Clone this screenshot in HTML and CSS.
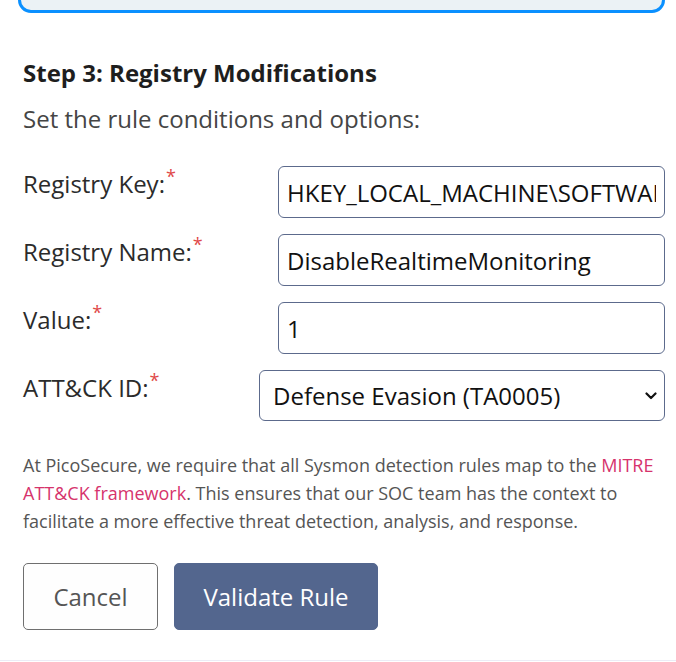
FILE: index.html
```html
<!DOCTYPE html>
<html lang="en">
<head>
<meta charset="utf-8">
<title>Step 3: Registry Modifications</title>
<link rel="stylesheet" href="styles.css">
</head>
<body>
<div class="page">
  <div class="prev-card"></div>
  <form class="step">
    <h2 class="step-title">Step 3: Registry Modifications</h2>
    <p class="step-sub">Set the rule conditions and options:</p>

    <div class="row">
      <label class="lbl" for="rk">Registry Key:<span class="req">*</span></label>
      <input class="ctl ctl-input" id="rk" type="text" value="HKEY_LOCAL_MACHINE\SOFTWARE\Policies\Microsoft\Windows Defender\Real-Time Protection">
    </div>
    <div class="row">
      <label class="lbl" for="rn">Registry Name:<span class="req">*</span></label>
      <input class="ctl ctl-input" id="rn" type="text" value="DisableRealtimeMonitoring">
    </div>
    <div class="row">
      <label class="lbl" for="rv">Value:<span class="req">*</span></label>
      <input class="ctl ctl-input" id="rv" type="text" value="1">
    </div>
    <div class="row">
      <label class="lbl" for="ak">ATT&amp;CK ID:<span class="req">*</span></label>
      <div class="select-wrap">
        <select class="ctl ctl-select" id="ak">
          <option>Defense Evasion (TA0005)</option>
        </select>
        <svg class="chev" width="12" height="8" viewBox="0 0 12 8" aria-hidden="true"><path d="M1.5 1.5 L6 6 L10.5 1.5" fill="none" stroke="#111" stroke-width="2.2" stroke-linecap="round" stroke-linejoin="round"/></svg>
      </div>
    </div>

    <p class="note">At PicoSecure, we require that all Sysmon detection rules map to the <a href="#" class="link">MITRE ATT&amp;CK framework</a>. This ensures that our SOC team has the context to facilitate a more effective threat detection, analysis, and response.</p>

    <div class="actions">
      <button type="button" class="btn btn-cancel">Cancel</button>
      <button type="button" class="btn btn-primary">Validate Rule</button>
    </div>
  </form>
</div>
</body>
</html>
```

FILE: styles.css
```css
html, body {
  margin: 0;
  padding: 0;
  background: #ffffff;
}
body {
  font-family: "Open Sans", "Noto Sans", sans-serif;
  overflow: hidden;
  height: 662px;
}
.page {
  padding: 0 11px 0 18px;
  height: 661px;
  border-bottom: 1px solid #ececf6;
  box-sizing: border-box;
  overflow: hidden;
}
.prev-card {
  height: 60px;
  margin-top: -47px;
  box-sizing: border-box;
  border: 3px solid #0a90ff;
  border-radius: 13px;
  background: #ebf2f5;
}
.step {
  padding-left: 5px;
}
.step-title {
  margin: 44px 0 0;
  font-size: 24px;
  line-height: 32px;
  font-weight: 700;
  color: #1e1e1e;
}
.step-sub {
  margin: 14px 0 0;
  font-size: 24px;
  line-height: 32px;
  color: #454545;
}
.row {
  display: flex;
  justify-content: space-between;
  align-items: flex-start;
  margin-top: 16px;
}
.step-sub + .row {
  margin-top: 31px;
}
.lbl {
  font-size: 24px;
  line-height: 32px;
  color: #2b2b2b;
  padding-top: 2px;
}
.req {
  color: #e04848;
  font-size: 18px;
  vertical-align: 10px;
  line-height: 0;
  margin-left: 1px;
}
.ctl {
  font-family: "Open Sans", "Noto Sans", sans-serif;
  font-size: 24px;
  color: #111;
  box-sizing: border-box;
  height: 52px;
  border: 1px solid #5c6a8c;
  border-radius: 6px;
  background: #fff;
  margin: 0;
}
.ctl-input {
  width: 387px;
  padding: 0 8px;
}
.select-wrap {
  position: relative;
  width: 406px;
}
.ctl-select {
  width: 100%;
  padding: 0 40px 0 13px;
  appearance: none;
  -webkit-appearance: none;
  height: 51px;
}
.chev {
  position: absolute;
  right: 8px;
  top: 22px;
  pointer-events: none;
}
.note {
  margin: 30px 0 0;
  font-size: 18px;
  line-height: 28px;
  color: #555;
}
.link {
  color: #d6336c;
  text-decoration: none;
}
.actions {
  display: flex;
  gap: 16px;
  margin-top: 28px;
}
.btn {
  font-family: "Open Sans", "Noto Sans", sans-serif;
  font-size: 24px;
  height: 67px;
  border-radius: 5px;
  cursor: pointer;
}
.btn-cancel {
  width: 135px;
  background: #fefefe;
  border: 1px solid #6f6f6f;
  color: #555;
}
.btn-primary {
  width: 204px;
  background: #53668e;
  border: 1px solid #53668e;
  color: #fff;
}
```
